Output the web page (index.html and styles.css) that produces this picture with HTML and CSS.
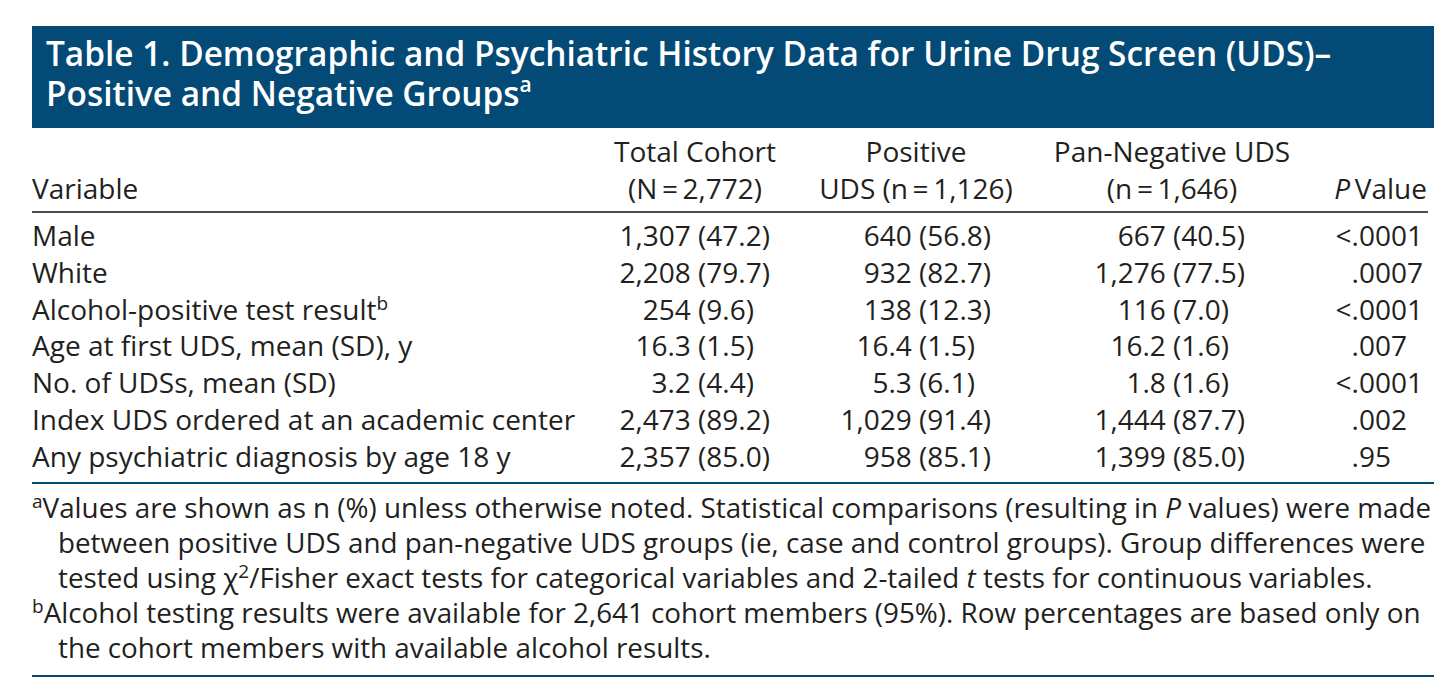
FILE: index.html
```html
<!DOCTYPE html>
<html>
<head>
<meta charset="utf-8">
<title>Table 1</title>
<link rel="stylesheet" href="styles.css">
</head>
<body>
<div class="page">
  <div class="title">
    <h1><span class="tl">Table 1. Demographic and Psychiatric History Data for Urine Drug Screen (UDS)–</span><span class="tl">Positive and Negative Groups<sup>a</sup></span></h1>
  </div>
  <div class="grid">
    <div class="hd c1">Variable</div>
    <div class="hd c2">Total Cohort<br>(N&#8201;=&#8201;2,772)</div>
    <div class="hd c3">Positive<br>UDS (n&#8201;=&#8201;1,126)</div>
    <div class="hd c4">Pan-Negative UDS<br>(n&#8201;=&#8201;1,646)</div>
    <div class="hd c5"><i>P</i>&#8201;Value</div>

    <div class="c1">Male</div>
    <div class="c2 num">1,307 (47.2)</div>
    <div class="c3 num">640 (56.8)</div>
    <div class="c4 num">667 (40.5)</div>
    <div class="c5 num">&lt;.0001</div>

    <div class="c1">White</div>
    <div class="c2 num">2,208 (79.7)</div>
    <div class="c3 num">932 (82.7)</div>
    <div class="c4 num">1,276 (77.5)</div>
    <div class="c5 num">.0007</div>

    <div class="c1">Alcohol-positive test result<sup>b</sup></div>
    <div class="c2 num">254 (9.6)<span class="g">0</span></div>
    <div class="c3 num">138 (12.3)</div>
    <div class="c4 num">116 (7.0)<span class="g">0</span></div>
    <div class="c5 num">&lt;.0001</div>

    <div class="c1">Age at first UDS, mean (SD), y</div>
    <div class="c2 num">16.3 (1.5)<span class="g">0</span></div>
    <div class="c3 num">16.4 (1.5)<span class="g">0</span></div>
    <div class="c4 num">16.2 (1.6)<span class="g">0</span></div>
    <div class="c5 num">.007<span class="g">0</span></div>

    <div class="c1">No. of UDSs, mean (SD)</div>
    <div class="c2 num">3.2 (4.4)<span class="g">0</span></div>
    <div class="c3 num">5.3 (6.1)<span class="g">0</span></div>
    <div class="c4 num">1.8 (1.6)<span class="g">0</span></div>
    <div class="c5 num">&lt;.0001</div>

    <div class="c1">Index UDS ordered at an academic center</div>
    <div class="c2 num">2,473 (89.2)</div>
    <div class="c3 num">1,029 (91.4)</div>
    <div class="c4 num">1,444 (87.7)</div>
    <div class="c5 num">.002<span class="g">0</span></div>

    <div class="c1">Any psychiatric diagnosis by age 18 y</div>
    <div class="c2 num">2,357 (85.0)</div>
    <div class="c3 num">958 (85.1)</div>
    <div class="c4 num">1,399 (85.0)</div>
    <div class="c5 num">.95<span class="g">00</span></div>
  </div>
  <div class="notes">
    <p class="note"><sup>a</sup>Values are shown as n (%) unless otherwise noted. Statistical comparisons (resulting in <i>P</i> values) were made<br>between positive UDS and pan-negative UDS groups (ie, case and control groups). Group differences were<br>tested using χ<sup>2</sup>/Fisher exact tests for categorical variables and 2-tailed <i>t</i> tests for continuous variables.</p>
    <p class="note"><sup>b</sup>Alcohol testing results were available for 2,641 cohort members (95%). Row percentages are based only on<br>the cohort members with available alcohol results.</p>
  </div>
</div>
</body>
</html>
```
FILE: styles.css
```css
html, body {
  margin: 0;
  padding: 0;
  background: #ffffff;
}
body {
  font-family: "Open Sans", "Noto Sans", sans-serif;
  color: #231f20;
  font-size: 28px;
}
.page {
  margin: 26px 0 0 32px;
  width: 1402px;
}
.title {
  background: #034a76;
  height: 102px;
  box-sizing: border-box;
  padding: 7px 0 0 14px;
}
.title h1 {
  margin: 0;
  font-size: 33.4px;
  line-height: 40px;
  font-weight: 600;
  color: #ffffff;
  white-space: nowrap;
}
.tl {
  display: block;
  height: 40px;
}
.title sup {
  font-size: 21px;
  vertical-align: 14px;
  line-height: 0;
}
.grid {
  display: grid;
  grid-template-columns: 568px 190px 252px 260px 126px;
  width: 1396px;
  line-height: 36.8px;
  margin-top: 5px;
  padding-bottom: 7px;
  white-space: nowrap;
}
.hd {
  line-height: 37px;
  border-bottom: 2px solid #4d4d4d;
  padding-bottom: 4px;
  margin-bottom: 4px;
  align-self: end;
  text-align: center;
}
.hd.c1 { text-align: left; }
.hd.c5 { text-align: right; padding-right: 1px; }
.num { text-align: right; }
.c2.num { padding-right: 20px; }
.c3.num { padding-right: 51px; }
.c4.num { padding-right: 57px; }
.c5.num { padding-right: 5px; }
.g { visibility: hidden; }
.grid sup, .note sup {
  font-size: 19px;
  vertical-align: 10px;
  line-height: 0;
}
.notes {
  border-top: 2px solid #034a76;
  border-bottom: 2px solid #034a76;
  padding: 6px 0 9px 0;
  font-size: 27.8px;
}
.note {
  margin: 0;
  line-height: 35.2px;
  padding-left: 26px;
  text-indent: -26px;
  white-space: nowrap;
}
```
